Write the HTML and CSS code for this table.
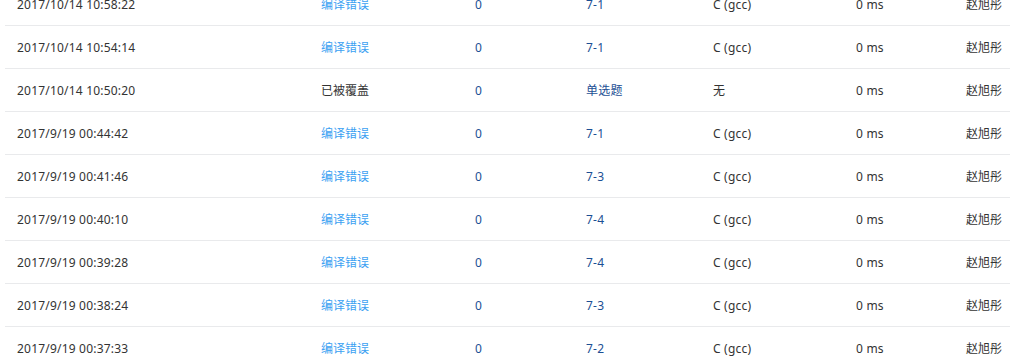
FILE: index.html
```html
<!DOCTYPE html>
<html lang="zh-CN">
<head>
<meta charset="utf-8">
<title>提交记录</title>
<link rel="stylesheet" href="styles.css">
</head>
<body>
<div class="table">
  <div class="row"><span class="c date">2017/10/14 10:58:22</span><span class="c st err">编译错误</span><span class="c num">0</span><span class="c prob">7-1</span><span class="c lang">C (gcc)</span><span class="c time">0 ms</span><span class="c user">赵旭彤</span></div>
  <div class="row"><span class="c date">2017/10/14 10:54:14</span><span class="c st err">编译错误</span><span class="c num">0</span><span class="c prob">7-1</span><span class="c lang">C (gcc)</span><span class="c time">0 ms</span><span class="c user">赵旭彤</span></div>
  <div class="row"><span class="c date">2017/10/14 10:50:20</span><span class="c st">已被覆盖</span><span class="c num">0</span><span class="c prob">单选题</span><span class="c lang">无</span><span class="c time">0 ms</span><span class="c user">赵旭彤</span></div>
  <div class="row"><span class="c date">2017/9/19 00:44:42</span><span class="c st err">编译错误</span><span class="c num">0</span><span class="c prob">7-1</span><span class="c lang">C (gcc)</span><span class="c time">0 ms</span><span class="c user">赵旭彤</span></div>
  <div class="row"><span class="c date">2017/9/19 00:41:46</span><span class="c st err">编译错误</span><span class="c num">0</span><span class="c prob">7-3</span><span class="c lang">C (gcc)</span><span class="c time">0 ms</span><span class="c user">赵旭彤</span></div>
  <div class="row"><span class="c date">2017/9/19 00:40:10</span><span class="c st err">编译错误</span><span class="c num">0</span><span class="c prob">7-4</span><span class="c lang">C (gcc)</span><span class="c time">0 ms</span><span class="c user">赵旭彤</span></div>
  <div class="row"><span class="c date">2017/9/19 00:39:28</span><span class="c st err">编译错误</span><span class="c num">0</span><span class="c prob">7-4</span><span class="c lang">C (gcc)</span><span class="c time">0 ms</span><span class="c user">赵旭彤</span></div>
  <div class="row"><span class="c date">2017/9/19 00:38:24</span><span class="c st err">编译错误</span><span class="c num">0</span><span class="c prob">7-3</span><span class="c lang">C (gcc)</span><span class="c time">0 ms</span><span class="c user">赵旭彤</span></div>
  <div class="row"><span class="c date">2017/9/19 00:37:33</span><span class="c st err">编译错误</span><span class="c num">0</span><span class="c prob">7-2</span><span class="c lang">C (gcc)</span><span class="c time">0 ms</span><span class="c user">赵旭彤</span></div>
</div>
</body>
</html>
```
FILE: styles.css
```css
html, body {
  margin: 0;
  padding: 0;
  background: #fff;
}
body {
  font-family: "Noto Sans", "Noto Sans CJK SC", sans-serif;
  font-size: 12px;
  color: #333;
  overflow: hidden;
}
.table {
  margin: -17px 1px 0 5px;
}
.row {
  display: grid;
  grid-template-columns: 304px 154px 111px 127px 143px 110px 1fr;
  height: 42px;
  align-items: center;
  border-bottom: 1px solid #e9eaec;
}
.c {
  padding-left: 12px;
  white-space: nowrap;
}
.date, .lang, .time, .num, .prob { letter-spacing: 0.2px; }
.err { color: #3ba1f2; }
.num, .prob { color: #1c4f94; }
.lang, .time, .user { color: #333; }
```
